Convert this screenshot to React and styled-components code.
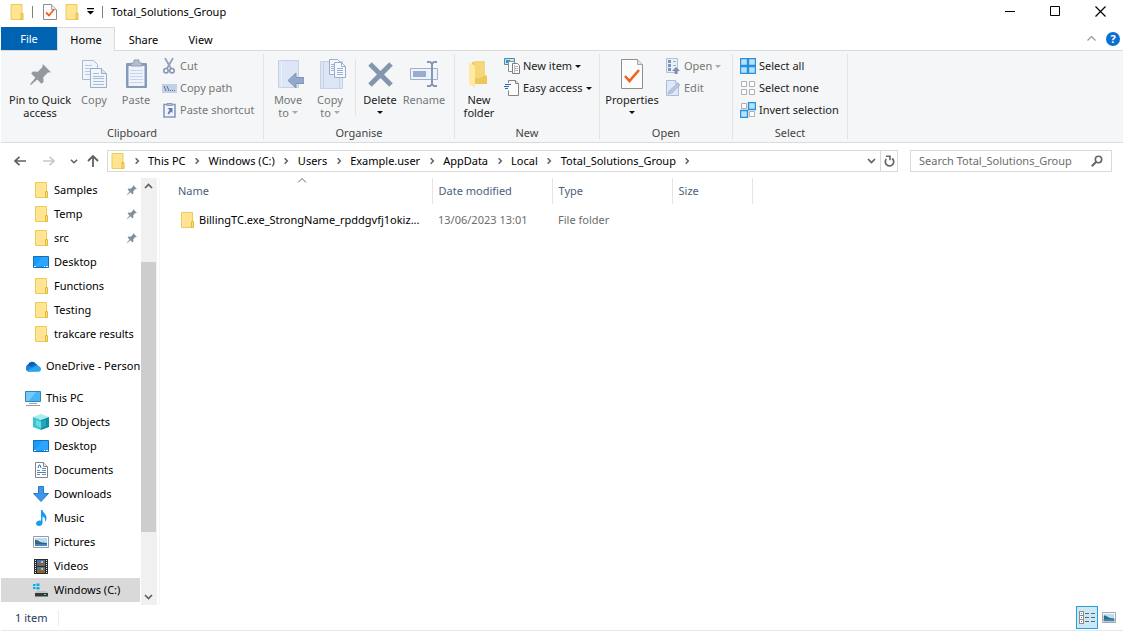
import React, { useState } from 'react';
import styled, { createGlobalStyle } from 'styled-components';

const App = () => {
  const [tab, setTab] = useState('Home');
  const [search, setSearch] = useState('');

  return (
    <Window>
      <GlobalStyle />
      <TitleBar>
        <QuickAccess>
          <FolderIcon large />
          <QuickDivider />
          <CheckPageIcon width={14} height={16} />
          <FolderIcon large />
          <QuickMenu aria-label="Customise Quick Access Toolbar">
            <svg width="7" height="7" viewBox="0 0 7 7">
              <path d="M0 0h7v1.2H0zM0 3h7L3.5 6.500z" fill="#000" />
            </svg>
          </QuickMenu>
          <QuickDivider />
        </QuickAccess>
        <Title>Total_Solutions_Group</Title>
        <WindowButton aria-label="Minimise">
          <svg width="11" height="11" viewBox="0 0 11 11">
            <path d="M0 5.5h10" stroke="#000" />
          </svg>
        </WindowButton>
        <WindowButton aria-label="Maximise">
          <svg width="11" height="11" viewBox="0 0 11 11">
            <path d="M.5 .5h9v9h-9z" stroke="#000" fill="none" />
          </svg>
        </WindowButton>
        <WindowButton aria-label="Close">
          <svg width="11" height="11" viewBox="0 0 11 11">
            <path d="M.5 .5l10 10M10.5 .5l-10 10" stroke="#000" strokeWidth="1.2" />
          </svg>
        </WindowButton>
      </TitleBar>

      <TabBar>
        <FileTab>File</FileTab>
        {TABS.map((name) => (
          <Tab key={name} $active={tab === name} onClick={() => setTab(name)}>
            {name}
          </Tab>
        ))}
        <TabTools>
          <ToolButton aria-label="Minimise the Ribbon">
            <svg width="9" height="5" viewBox="0 0 9 5">
              <path d="M.5 4.5l4-4 4 4" stroke="#999" strokeWidth="1.2" fill="none" />
            </svg>
          </ToolButton>
          <HelpButton aria-label="Help">?</HelpButton>
        </TabTools>
      </TabBar>

      <Ribbon>
        <Group $width={263}>
          <Tools $indent>
            <BigTool icon={<PinBigIcon />} lines={['Pin to Quick', 'access']} width={66} />
            <BigTool icon={<CopyIcon />} lines={['Copy']} width={42} off />
            <BigTool icon={<PasteIcon />} lines={['Paste']} width={42} off />
            <SmallTools>
              <SmallTool icon={<CutIcon />} off>Cut</SmallTool>
              <SmallTool icon={<CopyPathIcon />} off>Copy path</SmallTool>
              <SmallTool icon={<PasteShortcutIcon />} off>Paste shortcut</SmallTool>
            </SmallTools>
          </Tools>
          <GroupName>Clipboard</GroupName>
        </Group>
        <Group $width={191}>
          <Tools>
            <BigTool icon={<MoveToIcon />} lines={['Move', 'to']} width={42} off menu />
            <BigTool icon={<CopyToIcon />} lines={['Copy', 'to']} width={42} off menu />
            <ToolDivider />
            <BigTool icon={<DeleteIcon />} lines={['Delete', '']} width={44} menu />
            <BigTool icon={<RenameIcon />} lines={['Rename']} width={44} off />
          </Tools>
          <GroupName>Organise</GroupName>
        </Group>
        <Group $width={145}>
          <Tools>
            <BigTool icon={<NewFolderIcon />} lines={['New', 'folder']} width={42} />
            <SmallTools>
              <SmallTool icon={<NewItemIcon />} menu>New item</SmallTool>
              <SmallTool icon={<EasyAccessIcon />} menu>Easy access</SmallTool>
            </SmallTools>
          </Tools>
          <GroupName>New</GroupName>
        </Group>
        <Group $width={133}>
          <Tools>
            <BigTool
              icon={<CheckPageIcon width={22} height={30} />}
              lines={['Properties', '']}
              width={58}
              menu
            />
            <SmallTools>
              <SmallTool icon={<OpenIcon />} off menu>Open</SmallTool>
              <SmallTool icon={<EditIcon />} off>Edit</SmallTool>
            </SmallTools>
          </Tools>
          <GroupName>Open</GroupName>
        </Group>
        <Group $width={115}>
          <Tools>
            <SmallTools>
              <SmallTool icon={<TilesIcon on={[0, 1, 2, 3]} />}>Select all</SmallTool>
              <SmallTool icon={<TilesIcon on={[]} />}>Select none</SmallTool>
              <SmallTool icon={<TilesIcon on={[1, 2]} />}>Invert selection</SmallTool>
            </SmallTools>
          </Tools>
          <GroupName>Select</GroupName>
        </Group>
      </Ribbon>

      <NavBar>
        <NavButtons>
          <ToolButton aria-label="Back">
            <ArrowIcon color="#5f5f5f" />
          </ToolButton>
          <ToolButton aria-label="Forward">
            <ArrowIcon color="#c8c8c8" flip />
          </ToolButton>
          <ToolButton aria-label="Recent locations">
            <Chevron dir="down" small />
          </ToolButton>
          <ToolButton aria-label="Up">
            <svg width="12" height="12" viewBox="0 0 12 12">
              <path d="M6 12V1M1 6l5-5 5 5" stroke="#5f5f5f" strokeWidth="1.8" fill="none" />
            </svg>
          </ToolButton>
        </NavButtons>
        <AddressBar>
          <AddressIcon>
            <FolderIcon large />
          </AddressIcon>
          <CrumbArrow>
            <Chevron dir="right" small />
          </CrumbArrow>
          {CRUMBS.map((name) => (
            <React.Fragment key={name}>
              <Crumb>{name}</Crumb>
              <CrumbArrow>
                <Chevron dir="right" small />
              </CrumbArrow>
            </React.Fragment>
          ))}
          <AddressEnd>
            <AddressButton aria-label="Previous locations">
              <Chevron dir="down" />
            </AddressButton>
            <AddressButton aria-label="Refresh" $divided>
              <svg width="11" height="12" viewBox="0 0 11 12">
                <path d="M8.2 3.5A4.2 4.2 0 1 1 2.3 4" stroke="#666" strokeWidth="1.7" fill="none" />
                <path d="M2 1.2h4v4" stroke="#666" strokeWidth="1.6" fill="none" />
              </svg>
            </AddressButton>
          </AddressEnd>
        </AddressBar>
        <SearchBox>
          <SearchInput
            aria-label="Search Total_Solutions_Group"
            placeholder="Search Total_Solutions_Group"
            value={search}
            onChange={(e) => setSearch(e.target.value)}
          />
          <svg width="12" height="12" viewBox="0 0 12 12">
            <circle cx="7.5" cy="4.5" r="3.2" stroke="#666" strokeWidth="1.6" fill="none" />
            <path d="M5 7L.8 11.2" stroke="#666" strokeWidth="2" />
          </svg>
        </SearchBox>
      </NavBar>

      <Body>
        <Sidebar>
          {TREE.map((section, i) => (
            <TreeSection key={i}>
              {section.map((item) => (
                <TreeItem key={item.name} href="#" $root={item.root} $selected={item.selected}>
                  <TreeIcon>{item.icon}</TreeIcon>
                  <TreeName>{item.name}</TreeName>
                  {item.pinned && <PinSmallIcon />}
                </TreeItem>
              ))}
            </TreeSection>
          ))}
        </Sidebar>
        <ScrollBar>
          <ScrollButton aria-label="Scroll up">
            <Chevron dir="up" />
          </ScrollButton>
          <ScrollTrack>
            <ScrollThumb />
          </ScrollTrack>
          <ScrollButton aria-label="Scroll down">
            <Chevron dir="down" />
          </ScrollButton>
        </ScrollBar>
        <FilePane>
          <FileTable>
            <thead>
              <tr>
                <HeadCell $width={260}>
                  Name
                  <SortMark width="9" height="5" viewBox="0 0 9 5">
                    <path d="M.5 4.5l4-4 4 4" stroke="#666" fill="none" />
                  </SortMark>
                </HeadCell>
                <HeadCell $width={120}>Date modified</HeadCell>
                <HeadCell $width={120}>Type</HeadCell>
                <HeadCell $width={80}>Size</HeadCell>
              </tr>
            </thead>
            <tbody>
              <tr>
                <FileCell>
                  <FileName>
                    <FolderIcon />
                    BillingTC.exe_StrongName_rpddgvfj1okiz...
                  </FileName>
                </FileCell>
                <FileCell>13/06/2023 13:01</FileCell>
                <FileCell>File folder</FileCell>
                <FileCell />
              </tr>
            </tbody>
          </FileTable>
        </FilePane>
      </Body>

      <StatusBar>
        <ItemCount>1 item</ItemCount>
        <ViewButtons>
          <ViewButton aria-label="Details view" $active>
            <svg width="17" height="14" viewBox="0 0 17 14" shapeRendering="crispEdges">
              <path d="M.5 .5h4v12h-4zM.5 4.5h4M.5 8.5h4" stroke="#8c8c8c" fill="#fff" />
              <path d="M2 2h1v1H2z" fill="#3b9a4b" />
              <path d="M2 6h1v1H2z" fill="#2f7fd6" />
              <path d="M2 10h1v1H2z" fill="#d63a2f" />
              <path d="M6 2.5h4M12 2.5h4M6 6.5h4M12 6.5h4M6 10.5h4M12 10.5h4" stroke="#666" />
            </svg>
          </ViewButton>
          <ViewButton aria-label="Large icons view">
            <PictureIcon width={14} height={11} />
          </ViewButton>
        </ViewButtons>
      </StatusBar>
    </Window>
  );
};

const BigTool = ({ icon, lines, width, off, menu }) => (
  <BigButton $width={width} disabled={off}>
    <BigIcon>{icon}</BigIcon>
    {lines.map((line, i) => (
      <BigLine key={i}>
        {line}
        {menu && i === lines.length - 1 && <MenuArrow off={off} />}
      </BigLine>
    ))}
  </BigButton>
);

const SmallTool = ({ icon, off, menu, children }) => (
  <SmallButton disabled={off}>
    <SmallIcon>{icon}</SmallIcon>
    {children}
    {menu && <MenuArrow off={off} />}
  </SmallButton>
);

const MenuArrow = ({ off }) => (
  <svg width="6" height="3" viewBox="0 0 6 3">
    <path d="M0 0h6L3 3z" fill={off ? '#a8a8a8' : '#111'} />
  </svg>
);

const CHEVRONS = {
  up: 'M1 6l3.500-3.500L8 6',
  down: 'M1 3l3.5 3.5L8 3',
  right: 'M3 1.5l3 3-3 3',
};

const Chevron = ({ dir, small }) => (
  <svg width={small ? 8 : 9} height={small ? 8 : 9} viewBox="0 0 9 9">
    <path d={CHEVRONS[dir]} stroke="#606060" strokeWidth="1.7" fill="none" />
  </svg>
);

const ArrowIcon = ({ color, flip }) => (
  <svg width="12" height="10" viewBox="0 0 12 10">
    <path
      d={flip ? 'M0 5h11M6.5 .8L11 5 6.5 9.2' : 'M12 5H1M5.5 .8L1 5l4.5 4.2'}
      stroke={color}
      strokeWidth="1.7"
      fill="none"
    />
  </svg>
);

const FolderIcon = ({ large }) => (
  <svg width={large ? 14 : 13} height="16" viewBox="0 0 13 16">
    <path d="M.5 .5h11v15H.5z" fill="#ffe591" stroke="#eccb5c" />
    <path d="M10.5 9.5h2v6h-2z" fill="#ffdf7c" stroke="#e3b93c" />
  </svg>
);

const CheckPageIcon = ({ width, height }) => (
  <svg width={width} height={height} viewBox={`0 0 ${width} ${height}`}>
    <path d={`M.5 .5h${width - 6}l5 5v${height - 6}H.5z`} fill="#fcfcfc" stroke="#8e8e8e" />
    <path d={`M${width - 5.5} .5v5h5`} fill="#e4e4e4" stroke="#a6a6a6" />
    <path
      d={width > 16 ? 'M4 17l4.5 5L18 11' : 'M3 8.5l3 3 5-6'}
      stroke="#f2601d"
      strokeWidth={width > 16 ? 2.6 : 1.8}
      fill="none"
    />
  </svg>
);

const PIN =
  'M12.2 0L20 7.8l-3 .4-4.3 4.3.2 4.6-2 1.6-4-4L.8 20 0 19.2l5.100-6.100-4-4 1.700-1.900 4.600.2 4.300-4.200z';

const PinBigIcon = () => (
  <svg width="21" height="21" viewBox="0 0 20 20">
    <path d={PIN} fill="#929a9f" />
  </svg>
);

const PinSmallIcon = () => (
  <svg width="10" height="10" viewBox="0 0 20 20">
    <path d={PIN} fill="#84919c" />
  </svg>
);

const CopyIcon = () => (
  <svg width="25" height="28" viewBox="0 0 25 28">
    <path d="M.5 .5h11l4 4v15H.5z" fill="#f0f4fb" stroke="#aab7cf" />
    <path d="M3 5.5h7M3 8.5h9M3 11.5h9M3 14.5h9" stroke="#b8c6de" />
    <path d="M8.5 8.5h11l5 5v14h-16z" fill="#f0f4fb" stroke="#9cacc8" />
    <path d="M19.5 8.5v5h5" fill="#dbe4f2" stroke="#9cacc8" />
    <path d="M11 13.5h6M11 16.5h11M11 18.5h11M11 21.5h11M11 24.5h11" stroke="#a9badb" />
  </svg>
);

const PasteIcon = () => (
  <svg width="21" height="30" viewBox="0 0 21 30">
    <rect x="0" y="4" width="21" height="25" rx="1" fill="#8799ba" />
    <path d="M2.5 7h16v20h-16z" fill="#eff4fc" />
    <path d="M4 11.5h13M4 14.5h13M4 17.5h13M4 20.5h13M4 23.5h13" stroke="#c6d5ee" />
    <path d="M5 7V4h3V1h5v3h3v3z" fill="#b6bfce" stroke="#8d9bb4" />
  </svg>
);

const CutIcon = () => (
  <svg width="12" height="16" viewBox="0 0 12 16">
    <path d="M2 0l6 10.5M10 0L4 10.5" stroke="#94a3b8" strokeWidth="1.8" />
    <circle cx="3" cy="12.8" r="2.2" stroke="#8494b3" strokeWidth="1.5" fill="none" />
    <circle cx="9" cy="12.8" r="2.2" stroke="#8494b3" strokeWidth="1.5" fill="none" />
  </svg>
);

const CopyPathIcon = () => (
  <svg width="15" height="9" viewBox="0 0 15 9">
    <path d="M0 0h15v9H0z" fill="#c3d1e6" />
    <path d="M2 2l2 5M5 2l2 5M8 6.5h1M10 6.5h1M12 6.5h1" stroke="#5f7393" />
  </svg>
);

const PasteShortcutIcon = () => (
  <svg width="13" height="16" viewBox="0 0 13 16">
    <path d="M1 2.5h11V15H1z" fill="#f0f5fc" stroke="#8799ba" strokeWidth="1.6" />
    <path d="M4 3.5v-2h5v2z" fill="#b6bfce" stroke="#8d9bb4" />
    <path d="M4.5 6h5v5L8 9.500 6 12.500l-1.500-1L6.500 8z" fill="#5f7eb2" />
  </svg>
);

const MoveToIcon = () => (
  <svg width="32" height="30" viewBox="-6 0 32 30">
    <path d="M.5 1.5h20v27H.5z" fill="#dce6f4" stroke="#c5d2e5" />
    <path d="M3.5 2v26" stroke="#edf2fa" />
    <path d="M18 14v4.500h8v6h-8V29l-8-7.500z" fill="#93a8cb" stroke="#7e95bb" />
  </svg>
);

const CopyToIcon = () => (
  <svg width="32" height="30" viewBox="-6 0 32 30">
    <path d="M.5 2.5h22v27H.5z" fill="#dce6f4" stroke="#c5d2e5" />
    <path d="M3.5 3v26M19.5 19v10" stroke="#c5d2e5" />
    <path d="M9.5 .5h8l3 3v12h-11z" fill="#f5f8fd" stroke="#9cadc9" />
    <path d="M14.5 3.5h7l4 4v11h-11z" fill="#f5f8fd" stroke="#9cadc9" />
    <path
      d="M21.5 3.5v4h4M17 9.5h6M17 11.5h6M17 13.5h6M17 15.5h6M11 5.5h3M11 7.5h3M11 9.5h3M11 11.5h3"
      stroke="#9cb2d8"
      fill="none"
    />
  </svg>
);

const DeleteIcon = () => (
  <svg width="27" height="27" viewBox="0 0 27 27">
    <path d="M3 3l21 21M24 3L3 24" stroke="#8496ae" strokeWidth="5" />
  </svg>
);

const RenameIcon = () => (
  <svg width="28" height="28" viewBox="0 0 28 28">
    <path d="M.5 8.5h27v11H.5z" fill="#edf3fb" stroke="#9eb0cb" />
    <path d="M3 11h13v6H3z" fill="#99adcb" />
    <path
      d="M17 2h3l2 1.500L24 2h3M22 3v21M17 26h3l2-1.500 2 1.500h3"
      stroke="#8497b5"
      strokeWidth="2"
      fill="none"
    />
  </svg>
);

const NewFolderIcon = () => (
  <svg width="20" height="27" viewBox="0 0 20 27">
    <path d="M3 1h13v13l2 1v8H5z" fill="#efc65a" />
    <path d="M5 0h11v14l-4 3H5z" fill="#f5d678" />
    <path d="M0 1l6 4v22l-6-4z" fill="#ffe9a5" />
  </svg>
);

const NewItemIcon = () => (
  <svg width="16" height="16" viewBox="0 0 16 16">
    <path d="M.5 .5h10v6H.5z" fill="#c7e4f6" stroke="#438eb3" />
    <path d="M2 2h4v3H2z" fill="#3a8fc2" />
    <path d="M4.5 3.5h6v10h-6z" fill="#fafafa" stroke="#8f8f8f" />
    <path d="M8.5 5.5h5l2 2v8h-7z" fill="#fff" stroke="#7f7f7f" />
    <path d="M10 8.5h4M10 10.5h4M10 12.5h4" stroke="#8fb4ef" />
    <path d="M10.5 7v8" stroke="#f0a8a0" />
  </svg>
);

const EasyAccessIcon = () => (
  <svg width="16" height="16" viewBox="0 0 16 16">
    <path d="M4.5 3V.5h7l3 3v12h-10v-5" fill="#fcfcfc" stroke="#858585" />
    <path d="M11.5 .5v3h3" fill="#e2e2e2" stroke="#858585" />
    <path d="M1 4.5h6M0 6.5h5M1 8.5h3" stroke="#2c69ad" />
  </svg>
);

const OpenIcon = () => (
  <svg width="14" height="16" viewBox="0 0 14 16">
    <path d="M.5 .5h11v14H.5z" fill="#e9eff8" stroke="#b4c0d5" />
    <path d="M2 2h3v3H2zM2 6h3v3H2zM2 10h3v3H2z" fill="#7d94bb" />
    <path d="M7 3.5h3M7 7.5h3" stroke="#9fb0cd" />
    <path d="M10 9l4 4h-2.500v3h-3v-3H6z" fill="#7f91ae" />
  </svg>
);

const EditIcon = () => (
  <svg width="14" height="16" viewBox="0 0 14 16">
    <path d="M.5 .5h9l3 3v12H.5z" fill="#dfe8f8" stroke="#afbdd9" />
    <path d="M9.5 .5v3h3" fill="#f4f7fc" stroke="#afbdd9" />
    <path d="M2 14l1-3 9-8 2 2-8 8z" fill="#b9c6df" stroke="#99a9c9" strokeWidth=".6" />
  </svg>
);

const TilesIcon = ({ on }) => (
  <svg width="16" height="16" viewBox="0 0 16 16">
    {[0, 1, 2, 3].map((i) => {
      const x = (i % 2) * 8;
      const y = i > 1 ? 8 : 0;
      return on.includes(i) ? (
        <path
          key={i}
          d={`M${x + 0.5} ${y + 0.5}h7v7h-7z`}
          fill="#b9e1fb"
          stroke="#2391e0"
          strokeWidth="1.4"
        />
      ) : (
        <path
          key={i}
          d={`M${x + 1.5} ${y + 1.5}h5v5h-5z`}
          fill="#fff"
          stroke="#b0b0b0"
        />
      );
    })}
  </svg>
);

const DesktopIcon = () => (
  <svg width="16" height="12" viewBox="0 0 16 12">
    <path d="M.5 .5h15v11H.5z" fill="#179bff" stroke="#1171b5" />
    <path d="M9 1h6v9H2z" fill="#2ba5ff" />
    <path d="M1 10.5h2M11 10.5h1M13 10.5h2" stroke="#fff" />
  </svg>
);

const CloudIcon = () => (
  <svg width="16" height="11" viewBox="0 0 16 11">
    <path d="M3 9a3 3 0 0 1 0-5.500A4.500 4.500 0 0 1 11 3l-2 5z" fill="#0a5cad" />
    <path d="M6 5l4-2.500a4 4 0 0 1 3 2.500l-4 3z" fill="#1272c9" />
    <path d="M3 10.500A3 3 0 0 1 2.500 5c2-.8 3 .2 4 .8L12 10z" fill="#1685dc" />
    <path
      d="M2 9.500l8-4.200c3-1.300 6 .2 6 2.700a2.600 2.600 0 0 1-2.500 2.700H3.500z"
      fill="#29a5ee"
    />
  </svg>
);

const PcIcon = () => (
  <svg width="16" height="15" viewBox="0 0 16 15">
    <path d="M.5 .5h15v10H.5z" fill="#45b6f7" stroke="#3c7fa9" />
    <path d="M1 1h10L4 10H1z" fill="#74cafa" />
    <path d="M4 12.5h8" stroke="#8fa6b3" />
    <path d="M1 14.5h14" stroke="#8aa0ae" />
  </svg>
);

const CubeIcon = () => (
  <svg width="16" height="16" viewBox="0 0 16 16">
    <path d="M0 3l8-3 8 3-8 3z" fill="#a7edf1" />
    <path d="M0 3l8 3v10l-8-3z" fill="#3cc3cf" />
    <path d="M16 3L8 6v10l8-3z" fill="#118ea2" />
    <path d="M3 6l5 2 5-2v5l-5 3-5-3z" fill="#65dfe6" />
    <path d="M8 8l5-2v5l-5 3z" fill="#20a9b8" />
  </svg>
);

const DocumentIcon = () => (
  <svg width="13" height="16" viewBox="0 0 13 16">
    <path d="M.5 .5h8l4 4v11H.5z" fill="#fff" stroke="#858585" />
    <path d="M8.5 .5v4h4" fill="#eee" stroke="#858585" />
    <path d="M3 6l1-3h1l1 3" stroke="#2a7cc4" fill="none" />
    <path d="M7 6.5h4M2 8.5h3M7 8.5h4M2 12.5h3M7 12.5h4" stroke="#4d93cd" />
    <path d="M2 10.5h9" stroke="#6f7a84" />
  </svg>
);

const DownloadIcon = () => (
  <svg width="16" height="16" viewBox="0 0 16 16">
    <path d="M5.5 .5h5v7h5L8 15.500 .5 7.500h5z" fill="#3d97ee" stroke="#2878c4" />
  </svg>
);

const MusicIcon = () => (
  <svg width="11" height="16" viewBox="0 0 11 16">
    <path
      d="M5 0h1.500c.3 3 4.500 4 4 8.500-.2 1.700-1 2.800-1.700 3.500.8-3.400-.3-4.800-2.300-5.500V13c0 1.700-1.500 3-3.400 3C1.300 16 0 15 0 13.600 0 12 1.600 10.500 3.600 10.500c.5 0 1 .1 1.400.3z"
      fill="#179df0"
    />
  </svg>
);

const PictureIcon = ({ width = 16, height = 12 }) => (
  <svg width={width} height={height} viewBox="0 0 16 12" preserveAspectRatio="none">
    <path d="M.5 .5h15v11H.5z" fill="#fff" stroke="#969ba0" />
    <path d="M2 2h12v8H2z" fill="#b9ddf6" />
    <path d="M2 4c3-.5 4 2 7 2.500l5 .5v3H2z" fill="#33687c" />
    <path d="M2 8h12v2H2z" fill="#4784c4" />
  </svg>
);

const VideoIcon = () => (
  <svg width="14" height="15" viewBox="0 0 14 15">
    <path d="M0 0h14v15H0z" fill="#2b2b2b" />
    <path d="M1.5 1v14M12.5 1v14" stroke="#e8e8e8" strokeDasharray="1 1" />
    <path d="M3 1h8v6H3zM3 8h8v6H3z" fill="#3e76d8" />
    <path d="M3 5l2-2 2 2 2-3 2 3v2H3zM3 12l3-3 2 2 3-1v4H3z" fill="#7d6a3c" />
    <path d="M7 2h2v2H7zM7 9h2v2H7z" fill="#efb935" />
  </svg>
);

const DriveIcon = () => (
  <svg width="16" height="14" viewBox="0 0 16 14">
    <path d="M0 1h2.500v2H0zM3.500 .5h3V3h-3zM0 4h2.500v2H0zM3.500 4h3v2.500h-3z" fill="#00adef" />
    <path d="M4 8h9l2 2H2z" fill="#c2c5c7" />
    <path d="M2 10h13v3.500H2z" fill="#353a3c" />
    <path d="M11 11h2v1h-2z" fill="#4be05b" />
  </svg>
);

const TABS = ['Home', 'Share', 'View'];

const CRUMBS = [
  'This PC',
  'Windows (C:)',
  'Users',
  'Example.user',
  'AppData',
  'Local',
  'Total_Solutions_Group',
];

const TREE = [
  [
    { name: 'Samples', icon: <FolderIcon />, pinned: true },
    { name: 'Temp', icon: <FolderIcon />, pinned: true },
    { name: 'src', icon: <FolderIcon />, pinned: true },
    { name: 'Desktop', icon: <DesktopIcon /> },
    { name: 'Functions', icon: <FolderIcon /> },
    { name: 'Testing', icon: <FolderIcon /> },
    { name: 'trakcare results', icon: <FolderIcon /> },
  ],
  [{ name: 'OneDrive - Person', icon: <CloudIcon />, root: true }],
  [
    { name: 'This PC', icon: <PcIcon />, root: true },
    { name: '3D Objects', icon: <CubeIcon /> },
    { name: 'Desktop', icon: <DesktopIcon /> },
    { name: 'Documents', icon: <DocumentIcon /> },
    { name: 'Downloads', icon: <DownloadIcon /> },
    { name: 'Music', icon: <MusicIcon /> },
    { name: 'Pictures', icon: <PictureIcon /> },
    { name: 'Videos', icon: <VideoIcon /> },
    { name: 'Windows (C:)', icon: <DriveIcon />, selected: true },
  ],
];

const GlobalStyle = createGlobalStyle`
  * {
    box-sizing: border-box;
  }

  body {
    margin: 0;
    background: #fff;
  }

  body, button, input {
    font-family: 'Noto Sans', 'Open Sans', sans-serif;
    font-size: 11px;
    line-height: 16px;
    color: #000;
  }

  button {
    padding: 0;
    border: 0;
    background: none;
  }

  svg {
    display: block;
    flex: none;
  }
`;

const Window = styled.div`
  display: flex;
  flex-direction: column;
  height: 100vh;
  border-left: 1px solid #fff;
  overflow: hidden;
`;

const TitleBar = styled.header`
  display: flex;
  align-items: center;
  height: 27px;
  padding-bottom: 4px;
`;

const QuickAccess = styled.div`
  display: flex;
  align-items: center;
  gap: 8px;
  padding-left: 9px;
`;

const QuickDivider = styled.span`
  width: 1px;
  height: 12px;
  margin-right: 2px;
  background: #808080;
`;

const QuickMenu = styled.button`
  width: 7px;
  height: 7px;
`;

const Title = styled.span`
  flex: 1;
  margin-left: 6px;
`;

const WindowButton = styled.button`
  display: flex;
  align-items: center;
  justify-content: center;
  width: 45px;
  height: 22px;
`;

const TabBar = styled.nav`
  display: flex;
  height: 24px;
  border-bottom: 1px solid #dadbdc;
`;

const FileTab = styled.button`
  width: 56px;
  height: 23px;
  color: #fff;
  background: #0063b1;
`;

const Tab = styled.button`
  width: ${({ $active }) => ($active ? '58px' : '57px')};
  height: 24px;
  border: 1px solid ${({ $active }) => ($active ? '#dadbdc' : 'transparent')};
  border-bottom: 0;
  background: ${({ $active }) => ($active ? '#f5f6f7' : 'transparent')};
`;

const TabTools = styled.div`
  display: flex;
  align-items: center;
  gap: 10px;
  margin-left: auto;
  padding-right: 3px;
`;

const ToolButton = styled.button`
  display: flex;
  align-items: center;
  justify-content: center;
`;

const HelpButton = styled.button`
  width: 14px;
  height: 14px;
  border-radius: 50%;
  background: #0a6fd0;
  color: #fff;
  font-weight: bold;
  line-height: 14px;
`;

const Ribbon = styled.section`
  display: flex;
  flex: none;
  height: 92px;
  padding: 3px 0;
  background: #f5f6f7;
  border-bottom: 1px solid #dadbdc;
`;

const Group = styled.div`
  display: flex;
  flex-direction: column;
  width: ${({ $width }) => $width}px;
  border-right: 1px solid #e2e3e4;
`;

const Tools = styled.div`
  display: flex;
  flex: 1;
  padding: 1px 0 0 ${({ $indent }) => ($indent ? '6px' : '3px')};
`;

const GroupName = styled.div`
  height: 14px;
  line-height: 16px;
  text-align: center;
  color: #444;
`;

const BigButton = styled.button`
  display: flex;
  flex-direction: column;
  align-items: center;
  flex: none;
  width: ${({ $width }) => $width}px;
  height: 66px;
  color: #222;
  white-space: nowrap;

  &:disabled {
    color: #767676;
  }
`;

const BigIcon = styled.span`
  display: flex;
  align-items: center;
  justify-content: center;
  height: 38px;
`;

const BigLine = styled.span`
  display: flex;
  align-items: center;
  justify-content: center;
  gap: 3px;
  height: 13px;
  line-height: 13px;
`;

const ToolDivider = styled.span`
  width: 1px;
  height: 56px;
  margin: 4px 2px 0 4px;
  background: #e2e3e4;
`;

const SmallTools = styled.div`
  display: flex;
  flex-direction: column;
  padding-left: 4px;
`;

const SmallButton = styled.button`
  display: flex;
  align-items: center;
  gap: 3px;
  height: 22px;
  color: #222;
  white-space: nowrap;

  &:disabled {
    color: #767676;
  }
`;

const SmallIcon = styled.span`
  display: flex;
  align-items: center;
  justify-content: center;
  width: 16px;
`;

const NavBar = styled.div`
  display: flex;
  align-items: center;
  flex: none;
  height: 35px;
  padding: 0 11px 0 12px;
`;

const NavButtons = styled.div`
  display: grid;
  grid-template-columns: 14px 44px 6px 32px;
  width: 94px;
`;

const AddressBar = styled.div`
  display: flex;
  flex: 1;
  height: 22px;
  border: 1px solid #d9d9d9;
`;

const AddressIcon = styled.span`
  display: flex;
  align-items: center;
  padding-left: 3px;
`;

const CrumbArrow = styled.span`
  display: flex;
  align-items: center;
  justify-content: center;
  width: 23px;
`;

const Crumb = styled.button`
  white-space: nowrap;
`;

const AddressEnd = styled.div`
  display: flex;
  margin-left: auto;
`;

const AddressButton = styled.button`
  display: flex;
  align-items: center;
  justify-content: center;
  width: 17px;
  border-left: ${({ $divided }) => ($divided ? '1px solid #d9d9d9' : '0')};
`;

const SearchBox = styled.label`
  display: flex;
  align-items: center;
  width: 202px;
  height: 22px;
  margin-left: 12px;
  padding: 0 8px;
  border: 1px solid #d9d9d9;
`;

const SearchInput = styled.input`
  flex: 1;
  min-width: 0;
  height: 20px;
  padding: 0;
  border: 0;
  outline: 0;
  background: none;

  &::placeholder {
    color: #6d6d6d;
    opacity: 1;
  }
`;

const Body = styled.main`
  display: flex;
  flex: 1;
  min-height: 0;
`;

const Sidebar = styled.aside`
  display: flex;
  flex-direction: column;
  gap: 8px;
  width: 139px;
  overflow: hidden;
`;

const TreeSection = styled.div`
  display: flex;
  flex-direction: column;
`;

const TreeItem = styled.a`
  display: flex;
  align-items: center;
  height: 24px;
  padding: 0 3px 0 ${({ $root }) => ($root ? '24px' : '32px')};
  background: ${({ $selected }) => ($selected ? '#d9d9d9' : 'transparent')};
  color: #000;
  text-decoration: none;
  white-space: nowrap;
`;

const TreeIcon = styled.span`
  display: flex;
  align-items: center;
  justify-content: center;
  flex: none;
  width: 16px;
  margin-right: 5px;
`;

const TreeName = styled.span`
  flex: 1;
`;

const ScrollBar = styled.div`
  display: flex;
  flex-direction: column;
  width: 16px;
  margin-left: 1px;
  background: #f0f0f0;
`;

const ScrollButton = styled.button`
  display: flex;
  align-items: center;
  justify-content: center;
  width: 15px;
  height: 17px;
`;

const ScrollTrack = styled.div`
  display: flex;
  flex-direction: column;
  flex: 1;
  padding: 67px 1px 56px 0;
`;

const ScrollThumb = styled.div`
  flex: 1;
  background: #cdcdcd;
`;

const FilePane = styled.section`
  flex: 1;
  min-width: 0;
  margin-left: 2px;
  padding-left: 12px;
  border-left: 1px solid #f5f5f5;
`;

const FileTable = styled.table`
  width: 580px;
  table-layout: fixed;
  border-collapse: collapse;
`;

const HeadCell = styled.th`
  position: relative;
  width: ${({ $width }) => $width}px;
  height: 26px;
  padding: 0 6px;
  border-right: 1px solid #e5e5e5;
  color: #4c607a;
  font-weight: normal;
  text-align: left;
`;

const SortMark = styled.svg`
  position: absolute;
  top: 0;
  left: 50%;
  transform: translateX(-50%);
`;

const FileCell = styled.td`
  height: 32px;
  padding: 0 6px;
  color: #6d6d6d;
  white-space: nowrap;
`;

const FileName = styled.span`
  display: flex;
  align-items: center;
  gap: 5px;
  padding-left: 3px;
  color: #000;
`;

const StatusBar = styled.footer`
  display: flex;
  align-items: center;
  justify-content: space-between;
  flex: none;
  height: 26px;
  padding: 0 3px 0 14px;
  border-bottom: 1px solid #e6e6ec;
`;

const ItemCount = styled.span`
  width: 44px;
  border-right: 1px solid #ececec;
  color: #1e395b;
`;

const ViewButtons = styled.div`
  display: flex;
`;

const ViewButton = styled.button`
  display: flex;
  align-items: center;
  justify-content: center;
  width: 22px;
  height: 23px;
  border: 1px solid ${({ $active }) => ($active ? '#26a0da' : 'transparent')};
  background: ${({ $active }) => ($active ? '#cbe8f6' : 'transparent')};
`;

export default App;
